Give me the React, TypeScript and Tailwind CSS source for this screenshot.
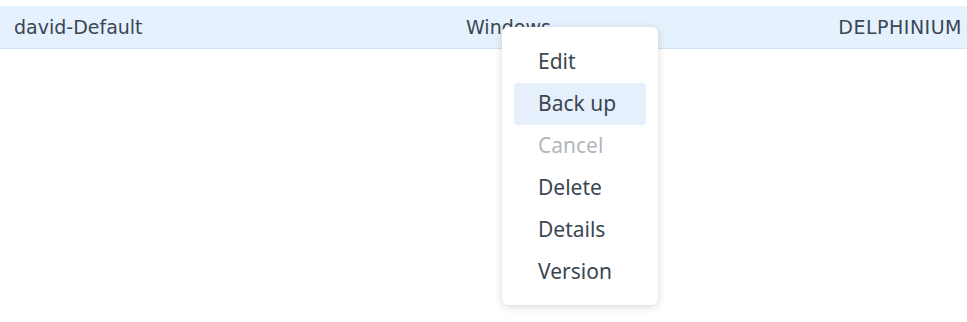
const items = [
  { label: "Edit" },
  { label: "Back up", active: true },
  { label: "Cancel", disabled: true },
  { label: "Delete" },
  { label: "Details" },
  { label: "Version" },
];

export default function App() {
  return (
    <div className="relative w-[967px] h-[322px] bg-white overflow-hidden">
      <div className="pt-[6px]">
        <div className="flex items-center h-[43px] bg-[#e5f1fd] border-b border-[#d3e2f1] text-[#3b4653] text-[19px] font-['DejaVu_Sans',Verdana,sans-serif]">
          <div className="w-[466px] pl-[14px]">david-Default</div>
          <div className="flex-1">Windows</div>
          <div className="pr-[5px] tracking-[0.5px]">DELPHINIUM</div>
        </div>
      </div>

      {/* context menu */}
      <div className="absolute left-[502px] top-[27px] w-[156px] bg-white rounded-[6px] shadow-[0_2px_8px_rgba(0,0,0,0.15)] pt-[14px] pb-[12px] px-[12px] font-['Noto_Sans',sans-serif]">
        {items.map((it) => (
          <div
            key={it.label}
            className={`h-[42px] flex items-center pl-[24px] rounded-[4px] text-[21px] ${
              it.active ? "bg-[#e5f0fc]" : ""
            } ${it.disabled ? "text-[#b3b7bc]" : "text-[#3b4653]"}`}
          >
            {it.label}
          </div>
        ))}
      </div>
    </div>
  );
}
